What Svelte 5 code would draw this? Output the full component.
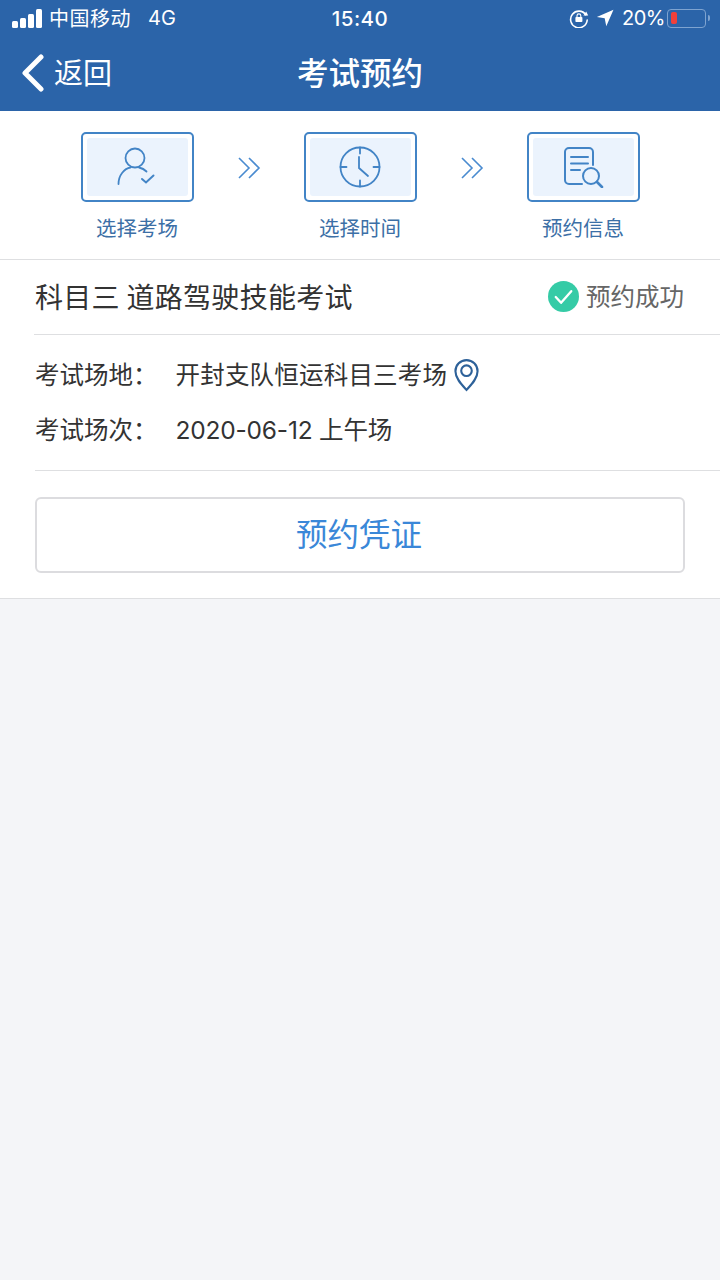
<script lang="ts">
  const steps = [
    { label: '选择考场', icon: 'user' },
    { label: '选择时间', icon: 'clock' },
    { label: '预约信息', icon: 'doc' }
  ];
</script>

<div class="page">
  <header class="top">
    <div class="status">
      <div class="status-left">
        <div class="signal"><i></i><i></i><i></i><i></i></div>
        <span class="carrier">中国移动</span>
        <span class="net">4G</span>
      </div>
      <span class="time">15:40</span>
      <div class="status-right">
        <svg width="20" height="20" viewBox="0 0 20 20" fill="none">
          <path d="M16.800 6.800A8.300 8.300 0 1 0 18.200 12" stroke="#fff" stroke-width="1.600" stroke-linecap="round"/>
          <path d="M14.400 7.400h4.800l-2-3.800z" fill="#fff"/>
          <rect x="6.400" y="9" width="7" height="5" rx="0.800" fill="#fff"/>
          <path d="M8 9V7.800a1.900 1.900 0 0 1 3.800 0V9" stroke="#fff" stroke-width="1.100"/>
        </svg>
        <svg class="loc" width="18" height="18" viewBox="0 0 17 17"><path d="M16.500 0.800 0.800 7.600l7.400 1.200 1.500 7.600z" fill="#fff"/></svg>
        <span class="pct">20%</span>
        <div class="battery"><div class="level"></div></div>
        <div class="nub"></div>
      </div>
    </div>
    <div class="nav">
      <div class="back">
        <svg width="24" height="38" viewBox="0 0 24 38" fill="none">
          <path d="M20 3 4 19l16 16" stroke="#fff" stroke-width="5" stroke-linecap="round" stroke-linejoin="round"/>
        </svg>
        <span>返回</span>
      </div>
      <h1>考试预约</h1>
    </div>
  </header>

  <section class="steps">
    {#each steps as step, i}
      {#if i > 0}
        <svg class="arrows" width="24" height="24" viewBox="0 0 24 24" fill="none">
          <path d="M2 2l10 10L2 22M12 2l10 10-10 10" stroke="#4a8bd0" stroke-width="1.600"/>
        </svg>
      {/if}
      <div class="step">
        <div class="step-box">
          <div class="step-inner">
            {#if step.icon === 'user'}
              <svg width="42" height="42" viewBox="0 0 42 42" fill="none" stroke="#4284c6" stroke-width="1.800" stroke-linecap="round">
                <circle cx="19" cy="12" r="9.500"/>
                <path d="M2.500 38c0-9 6-15.500 12-16.500M23 21.500c3 .7 5.500 2 7.500 4"/>
                <path d="M26 33l4 3.500 7.500-7" stroke-width="2"/>
              </svg>
            {:else if step.icon === 'clock'}
              <svg width="42" height="42" viewBox="0 0 42 42" fill="none" stroke="#4284c6" stroke-width="1.800" stroke-linecap="round">
                <circle cx="21" cy="21" r="19.500"/>
                <path d="M21 1.500v6M21 34.500v6M1.500 21h6M34.500 21h6M20 11v11l9 8"/>
              </svg>
            {:else}
              <svg width="42" height="42" viewBox="0 0 42 42" fill="none" stroke="#4284c6" stroke-width="2" stroke-linecap="round">
                <path d="M20 38H7a4 4 0 0 1-4-4V6a4 4 0 0 1 4-4h20a4 4 0 0 1 4 4v13"/>
                <path d="M9 11h17M9 17.500h17M9 24h9"/>
                <circle cx="29" cy="30" r="8"/>
                <path d="M35 36l5 5" stroke-width="2.600"/>
              </svg>
            {/if}
          </div>
        </div>
        <span class="step-label">{step.label}</span>
      </div>
    {/each}
  </section>

  <section class="card">
    <div class="title-row">
      <h2>科目三 道路驾驶技能考试</h2>
      <div class="result">
        <svg width="31" height="31" viewBox="0 0 32 32" fill="none">
          <circle cx="16" cy="16" r="16" fill="#35cba6"/>
          <path d="M8 16.500l5.500 6L24 10.500" stroke="#fff" stroke-width="2.400" stroke-linecap="round" stroke-linejoin="round"/>
        </svg>
        <span>预约成功</span>
      </div>
    </div>
    <div class="details">
      <div class="row">
        <span class="key">考试场地：</span>
        <span class="value">开封支队恒运科目三考场</span>
        <svg class="pin" width="25" height="34" viewBox="0 0 26 34" fill="none" stroke="#2d6199" stroke-width="2.200">
          <path d="M13 32.500C8 27 1.500 20.500 1.500 13a11.500 11.500 0 0 1 23 0c0 7.500-6.500 14-11.500 19.500z"/>
          <circle cx="13" cy="12.500" r="5.500"/>
        </svg>
      </div>
      <div class="row">
        <span class="key">考试场次：</span>
        <span class="value date">2020-06-12 上午场</span>
      </div>
    </div>
    <div class="actions">
      <button>预约凭证</button>
    </div>
  </section>
</div>

<style>
  :global(body) {
    margin: 0;
    background: #f4f5f8;
  }

  .page {
    min-height: 1280px;
    font-family: "Noto Sans CJK SC", "Liberation Sans", sans-serif;
    background: #f4f5f8;
  }

  .top {
    height: 111px;
    background: #2b64a9;
    color: #fff;
    overflow: hidden;
  }

  .status {
    display: grid;
    grid-template-columns: 1fr auto 1fr;
    align-items: center;
    height: 36px;
    padding: 0 10px 0 12px;
    font-family: "Inter", "Noto Sans CJK SC", sans-serif;
  }

  .status-left,
  .status-right {
    display: flex;
    align-items: center;
  }

  .status-right {
    justify-content: flex-end;
  }

  .signal {
    display: flex;
    align-items: flex-end;
    gap: 2px;
    height: 20px;
    margin-right: 7px;
  }

  .signal i {
    width: 6px;
    border-radius: 1.500px;
    background: #fff;
  }

  .signal i:nth-child(1) { height: 7px; }
  .signal i:nth-child(2) { height: 10px; }
  .signal i:nth-child(3) { height: 14px; }
  .signal i:nth-child(4) { height: 19px; }

  .carrier {
    font-family: "Noto Sans CJK SC", sans-serif;
    font-size: 20px;
    line-height: 36px;
    letter-spacing: 0.500px;
  }

  .net {
    margin-left: 17px;
    font-size: 20px;
    line-height: 36px;
  }

  .time {
    margin-right: 2px;
    font-size: 20.500px;
    font-weight: 500;
    letter-spacing: 0.500px;
  }

  .loc {
    margin-left: 7px;
  }

  .pct {
    margin-left: 8px;
    font-size: 20px;
    letter-spacing: -0.500px;
  }

  .battery {
    box-sizing: border-box;
    width: 39px;
    height: 19px;
    margin-left: 2px;
    padding: 2.500px;
    border: 1.500px solid #7ea3d0;
    border-radius: 4px;
  }

  .level {
    width: 6px;
    height: 100%;
    border-radius: 2px;
    background: #f0403a;
  }

  .nub {
    width: 2px;
    height: 6px;
    margin-left: 2px;
    border-radius: 0 2px 2px 0;
    background: #7ea3d0;
  }

  .nav {
    position: relative;
    height: 75px;
  }

  .back {
    display: flex;
    align-items: center;
    gap: 9px;
    height: 74px;
    padding-left: 21px;
  }

  .back span {
    font-size: 29px;
    line-height: 70px;
    margin-top: -4px;
  }

  h1 {
    position: absolute;
    top: 0;
    left: 0;
    right: 0;
    margin: 0;
    font-size: 31.500px;
    font-weight: 500;
    line-height: 70px;
    text-align: center;
  }

  .steps {
    display: flex;
    justify-content: center;
    align-items: flex-start;
    gap: 43px;
    height: 149px;
    box-sizing: border-box;
    padding-top: 21px;
    background: #fff;
    border-bottom: 1px solid #dedfe1;
  }

  .arrows {
    margin-top: 24px;
  }

  .step {
    display: flex;
    flex-direction: column;
    align-items: center;
    width: 113px;
  }

  .step-box {
    box-sizing: border-box;
    width: 113px;
    height: 70px;
    padding: 4px;
    border: 2px solid #4284c6;
    border-radius: 5px;
  }

  .step-inner {
    display: flex;
    align-items: center;
    justify-content: center;
    height: 100%;
    border-radius: 3px;
    background: #ebf3fd;
  }

  .step-label {
    margin-top: 10px;
    font-size: 20.500px;
    line-height: 30px;
    color: #3c6fa6;
  }

  .card {
    background: #fff;
    border-bottom: 1px solid #dedfe1;
  }

  .title-row {
    display: flex;
    align-items: center;
    justify-content: space-between;
    box-sizing: border-box;
    height: 75px;
    margin-left: 34px;
    padding: 0 36px 2px 1px;
    border-bottom: 1px solid #dedfe1;
  }

  h2 {
    margin: 0;
    font-size: 28px;
    font-weight: 400;
    letter-spacing: 0.300px;
    color: #333;
  }

  .result {
    display: flex;
    align-items: center;
    gap: 7px;
    font-size: 24.500px;
    color: #666;
  }

  .result span {
    padding-bottom: 2px;
  }

  .details {
    display: flex;
    flex-direction: column;
    gap: 15px;
    margin-left: 35px;
    height: 136px;
    box-sizing: border-box;
    padding-top: 18px;
    border-bottom: 1px solid #dedfe1;
  }

  .row {
    display: flex;
    align-items: center;
    height: 40px;
    font-family: "Inter", "Noto Sans CJK SC", sans-serif;
    font-size: 24.500px;
    color: #333;
  }

  .key {
    width: 140.500px;
  }

  .value {
    letter-spacing: 0.200px;
  }

  .date {
    letter-spacing: -0.200px;
  }

  .pin {
    margin: 4px 0 0 7px;
  }

  .actions {
    padding: 26px 35px 25px;
  }

  button {
    display: block;
    width: 100%;
    height: 76px;
    padding: 0 2px 6px 0;
    border: 2px solid #dcdcdf;
    border-radius: 6px;
    background: #fff;
    font-family: inherit;
    font-size: 31.500px;
    color: #3a87d8;
  }
</style>
